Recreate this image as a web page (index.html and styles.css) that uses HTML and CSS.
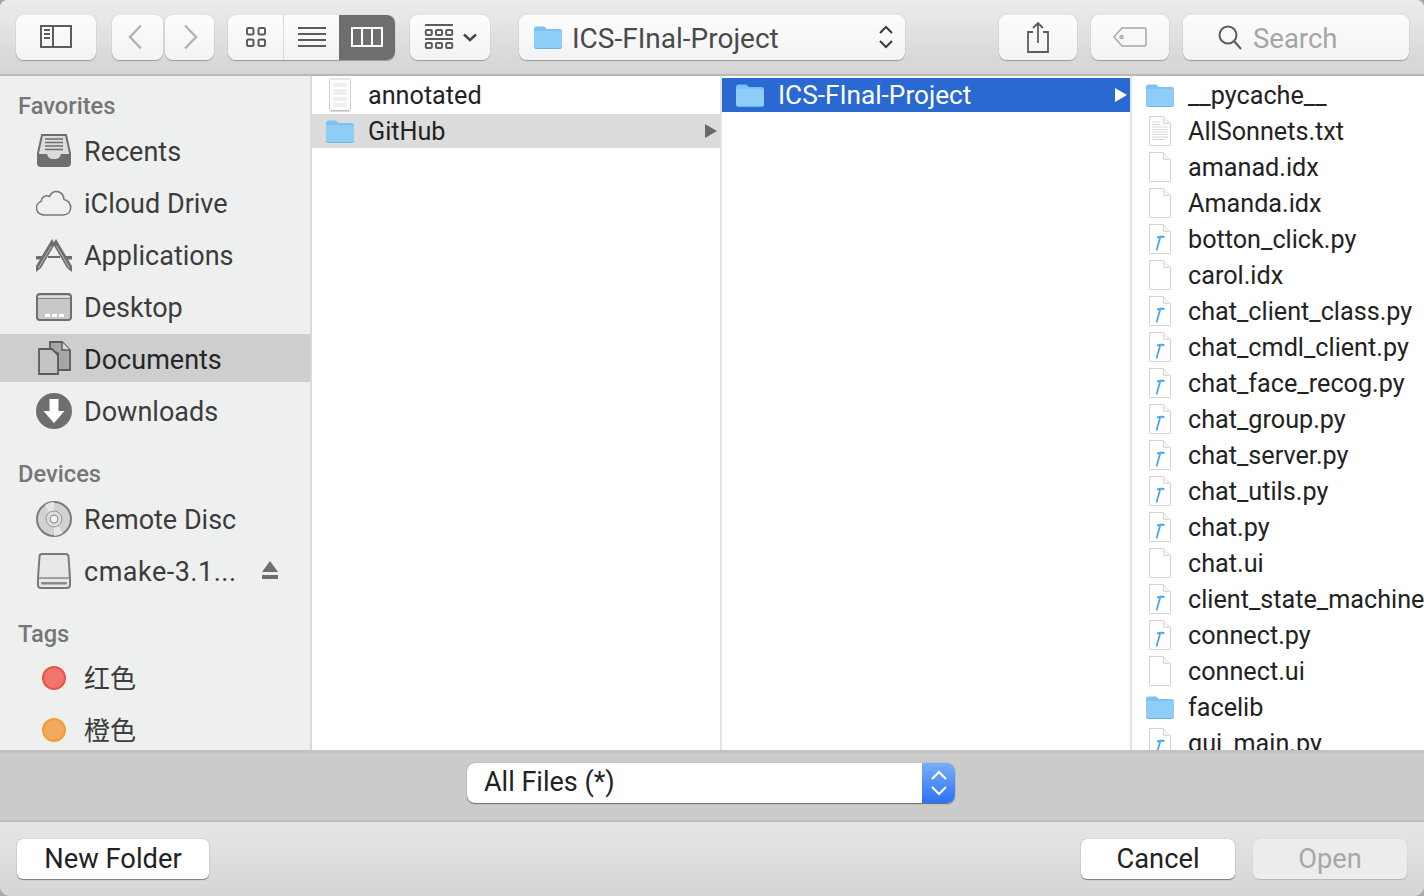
FILE: index.html
```html
<!DOCTYPE html>
<html lang="en">
<head>
    <meta charset="UTF-8">
    <title>Open</title>
    <link rel="stylesheet" href="styles.css">
</head>
<body>

<svg class="defs" width="0" height="0">
    <symbol id="folder" viewBox="0 0 30 24">
        <path d="M1 4.500C1 2.500 2 1.500 3.500 1.500H10c1.500 0 2 .6 2.800 1.600.5.6 1 .9 2 .9h11.700C28.100 4 29 4.900 29 6.500V21c0 1.500-.9 2.500-2.500 2.500h-23C2 23.500 1 22.500 1 21z" fill="#7cc2f5"/>
        <path d="M1 7.500C1 6.500 1.800 6 2.800 6h24.400c1 0 1.800.5 1.800 1.500V21c0 1.500-.9 2.500-2.500 2.500h-23C2 23.500 1 22.500 1 21z" fill="#8dcdf8"/>
        <path d="M1 22c.3 1 1.200 1.500 2.500 1.500h23c1.300 0 2.200-.5 2.500-1.500" fill="none" stroke="#6fb2e2"/>
    </symbol>
    <symbol id="page" viewBox="0 0 24 32">
        <path d="M1.500 1.500h14l7 7v21a1 1 0 0 1-1 1h-19a1 1 0 0 1-1-1z" fill="#fff" stroke="#d2d2d2"/>
        <path d="M15.500 1.500v7h7" fill="#f4f4f4" stroke="#d8d8d8"/>
    </symbol>
    <symbol id="py" viewBox="0 0 24 32">
        <use href="#page" width="24" height="32"/>
        <path d="M9 14.500c2-.8 4.500-1 7.500-.5M12.300 14 8.500 27.500" fill="none" stroke="#4aa8ee" stroke-width="1.800"/>
    </symbol>
    <symbol id="txt" viewBox="0 0 24 32">
        <use href="#page" width="24" height="32"/>
        <path d="M4 7h8M4 9.500h8M4 12h16M4 14.500h16M4 17h16M4 19.500h16M4 22h16M4 24.500h12" stroke="#cfcfcf" stroke-width=".8"/>
    </symbol>
    <symbol id="preview" viewBox="0 0 24 34">
        <rect x="1.500" y="1" width="21" height="31.500" rx="1" fill="#fff" stroke="#cfcfcf"/>
        <path d="M5 6h14M5 8h14M5 12h14M5 14h14M5 16h14M5 20h14M5 22h14M5 26h14M5 28h14" stroke="#e2e2e2" stroke-width="1.200"/>
        <path d="M2 33h20" stroke="#b8b8b8"/>
    </symbol>
</svg>

<div class="window">
    <div class="toolbar">
        <button class="tool sidebar-btn">
            <svg width="32" height="24" viewBox="0 0 32 24" fill="none" stroke="#5c5c5c" stroke-width="2"><rect x="1" y="1" width="30" height="21"/><path d="M13 1v21"/><path d="M4 5h6M4 9h6M4 13h6"/></svg>
        </button>
        <div class="nav-pair">
            <button class="tool back-btn">
                <svg width="16" height="26" viewBox="0 0 16 26" fill="none" stroke="#b4b4b4" stroke-width="2.500"><path d="M14 1.500 3 13l11 11.500"/></svg>
            </button>
            <button class="tool forward-btn">
                <svg width="16" height="26" viewBox="0 0 16 26" fill="none" stroke="#b4b4b4" stroke-width="2.500"><path d="m2 1.500 11 11.500L2 24.500"/></svg>
            </button>
        </div>
        <div class="view-group">
            <button class="view-seg seg-icons">
                <svg width="20" height="20" viewBox="0 0 20 20" fill="none" stroke="#5c5c5c" stroke-width="2"><rect x="1" y="1" width="6.500" height="6.500" rx="1.500"/><rect x="12.500" y="1" width="6.500" height="6.500" rx="1.500"/><rect x="1" y="12.500" width="6.500" height="6.500" rx="1.500"/><rect x="12.500" y="12.500" width="6.500" height="6.500" rx="1.500"/></svg>
            </button>
            <button class="view-seg seg-list">
                <svg width="28" height="20" viewBox="0 0 28 20" stroke="#5c5c5c" stroke-width="2"><path d="M0 1h28M0 7h28M0 13h28M0 19h28"/></svg>
            </button>
            <button class="view-seg seg-columns">
                <svg width="32" height="20" viewBox="0 0 32 20" fill="none" stroke="#fff" stroke-width="2"><rect x="1" y="1" width="30" height="18"/><path d="M11 1v18M21 1v18"/></svg>
            </button>
        </div>
        <button class="tool arrange-btn">
            <svg width="30" height="26" viewBox="0 0 30 26" fill="none" stroke="#5c5c5c"><path d="M1 1h28M1 15h28" stroke-width="1.800"/><rect x="1.800" y="6" width="6" height="5" rx="1" stroke-width="2"/><rect x="12" y="6" width="6" height="5" rx="1" stroke-width="2"/><rect x="22.200" y="6" width="6" height="5" rx="1" stroke-width="2"/><rect x="1.800" y="19" width="6" height="5" rx="1" stroke-width="2"/><rect x="12" y="19" width="6" height="5" rx="1" stroke-width="2"/><rect x="22.200" y="19" width="6" height="5" rx="1" stroke-width="2"/></svg>
            <svg width="14" height="9" viewBox="0 0 14 9" fill="none" stroke="#4a4a4a" stroke-width="2.500"><path d="m1 1.500 6 5.500 6-5.500"/></svg>
        </button>
        <button class="tool path-popup">
            <svg width="30" height="24" class="path-folder"><use href="#folder"/></svg>
            <span class="path-name">ICS-FInal-Project</span>
            <svg width="16" height="26" viewBox="0 0 16 26" fill="none" stroke="#3c3c3c" stroke-width="2"><path d="m2 9 6-6 6 6M2 17l6 6 6-6"/></svg>
        </button>
        <button class="tool share-btn">
            <svg width="24" height="32" viewBox="0 0 24 32" fill="none" stroke="#5c5c5c" stroke-width="1.800"><path d="M7 11H2v20h20V11h-5"/><path d="M12 22V2M7 7l5-5 5 5"/></svg>
        </button>
        <button class="tool tag-btn">
            <svg width="34" height="20" viewBox="0 0 34 20" fill="none" stroke="#a8a8a8" stroke-width="1.500"><path d="M9 1h22a2 2 0 0 1 2 2v14a2 2 0 0 1-2 2H9l-8-9z"/><circle cx="8.500" cy="10" r="1.500"/></svg>
        </button>
        <div class="tool search-box">
            <svg width="26" height="26" viewBox="0 0 26 26" fill="none" stroke="#5c5c5c" stroke-width="2"><circle cx="11" cy="11" r="8.500"/><path d="m17 17 7 8"/></svg>
            <span class="search-text">Search</span>
        </div>
    </div>

    <div class="browser">
        <div class="sidebar">
            <div class="side-head first">Favorites</div>
            <div class="side-item">
                <svg class="side-icon" width="36" height="36" viewBox="0 0 36 36"><path d="M6 2h24l4 18v10a3 3 0 0 1-3 3H5a3 3 0 0 1-3-3V20z" fill="#dcdcdc" stroke="#6e6e6e" stroke-width="2"/><path d="M9 6h18M9 9.500h18M9 13h18M9 16.500h18" stroke="#6e6e6e" stroke-width="1.500"/><path d="M2 21h9c1 4 3 5 7 5s6-1 7-5h9v9a3 3 0 0 1-3 3H5a3 3 0 0 1-3-3z" fill="#6e6e6e"/></svg>
                <span>Recents</span>
            </div>
            <div class="side-item">
                <svg class="side-icon" width="36" height="36" viewBox="0 0 36 36"><path d="M9 30C-1 30-2 19 5 16.500c.5-4.500 5-7 8.500-5C17 4 27 5 28 14.500c9 1.500 9 15.500-1 15.500z" fill="#f0f0f0" stroke="#7a7a7a" stroke-width="1.600"/></svg>
                <span>iCloud Drive</span>
            </div>
            <div class="side-item">
                <svg class="side-icon" width="36" height="36" viewBox="0 0 36 36"><path d="M16 2 0 29v6l5-4L19 7z" fill="#6e6e6e"/><path d="M20 2 17 7l14 24 5 4v-6z" fill="#6e6e6e"/><path d="M15.500 9 2.500 31M20.500 9l13 22" stroke="#bdbdbd"/><path d="M0 19h6v3.500H0zM30 19h6v3.500h-6zM12 19h12v2H12z" fill="#6e6e6e"/></svg>
                <span>Applications</span>
            </div>
            <div class="side-item">
                <svg class="side-icon" width="36" height="36" viewBox="0 0 36 36"><rect x="1" y="5" width="34" height="26" rx="3" fill="#c8c8c8" stroke="#6e6e6e" stroke-width="2"/><path d="M1 9h34" stroke="#6e6e6e" stroke-width="1.500"/><path d="M2 8h32" stroke="#efefef" stroke-width="1.500"/><path d="M9 28h5v-3H9zM16 28h5v-3h-5zM23 28h5v-3h-5z" fill="#fff"/></svg>
                <span>Desktop</span>
            </div>
            <div class="side-item selected">
                <svg class="side-icon" width="36" height="36" viewBox="0 0 36 36"><path d="M14 2h12l8 8v20H22V13l-8-3z" fill="#a6a6a6" stroke="#5c5c5c" stroke-width="1.800"/><path d="M3 9h13l6 6v19H3z" fill="#c4c4c4" stroke="#5c5c5c" stroke-width="1.800"/><path d="M26 2v8h8" fill="#d8d8d8" stroke="#5c5c5c" stroke-width="1.500"/></svg>
                <span>Documents</span>
            </div>
            <div class="side-item">
                <svg class="side-icon" width="36" height="36" viewBox="0 0 36 36"><circle cx="18" cy="18" r="18" fill="#6e6e6e"/><path d="M13.500 6h9v12h6L18 30 7.500 18h6z" fill="#fff"/></svg>
                <span>Downloads</span>
            </div>

            <div class="side-head">Devices</div>
            <div class="side-item">
                <svg class="side-icon" width="36" height="36" viewBox="0 0 36 36"><circle cx="18" cy="18" r="17" fill="#d2d2d2" stroke="#7c7c7c" stroke-width="2"/><path d="M18 18 9 4a17 17 0 0 1 9-3zM18 18l9 14a17 17 0 0 1-9 3z" fill="#e6e6e6"/><circle cx="18" cy="18" r="8" fill="#dcdcdc" stroke="#9a9a9a"/><circle cx="18" cy="18" r="4" fill="#f0f0f0" stroke="#8a8a8a"/></svg>
                <span>Remote Disc</span>
            </div>
            <div class="side-item">
                <svg class="side-icon" width="36" height="36" viewBox="0 0 36 36"><path d="M6 1h24a2.500 2.500 0 0 1 2.500 2.500L34 25v7a3 3 0 0 1-3 3H5a3 3 0 0 1-3-3v-7L3.500 3.500A2.500 2.500 0 0 1 6 1z" fill="#e8e8e8" stroke="#7a7a7a" stroke-width="2"/><path d="M2 25h32" stroke="#8a8a8a" stroke-width="1.500"/><rect x="5" y="29" width="26" height="2.500" rx="1" fill="#8a8a8a"/></svg>
                <span class="device-name">cmake-3.1...</span>
                <svg class="eject" width="18" height="18" viewBox="0 0 18 18" fill="#6e6e6e"><path d="M9 0 17 11H1z"/><rect x="1" y="14" width="16" height="4"/></svg>
            </div>

            <div class="side-head tags-head">Tags</div>
            <div class="side-item">
                <span class="tag-dot red"></span>
                <span class="tag-label">红色</span>
            </div>
            <div class="side-item">
                <span class="tag-dot orange"></span>
                <span class="tag-label">橙色</span>
            </div>
        </div>

        <div class="column">
            <div class="row">
                <svg class="row-icon" width="30" height="34" viewBox="0 0 30 34"><use href="#preview" x="3" y="0" width="24" height="34"/></svg>
                <span>annotated</span>
            </div>
            <div class="row open">
                <svg class="row-icon" width="30" height="24"><use href="#folder"/></svg>
                <span>GitHub</span>
                <span class="arrow"></span>
            </div>
        </div>

        <div class="column">
            <div class="row current">
                <svg class="row-icon" width="30" height="24"><use href="#folder"/></svg>
                <span>ICS-FInal-Project</span>
                <span class="arrow"></span>
            </div>
        </div>

        <div class="column last">
            <div class="row"><svg class="row-icon" width="30" height="24"><use href="#folder"/></svg><span>__pycache__</span></div>
            <div class="row"><svg class="row-icon" width="30" height="34" viewBox="0 0 30 34"><use href="#txt" x="3" y="1" width="24" height="32"/></svg><span>AllSonnets.txt</span></div>
            <div class="row"><svg class="row-icon" width="30" height="34" viewBox="0 0 30 34"><use href="#page" x="3" y="1" width="24" height="32"/></svg><span>amanad.idx</span></div>
            <div class="row"><svg class="row-icon" width="30" height="34" viewBox="0 0 30 34"><use href="#page" x="3" y="1" width="24" height="32"/></svg><span>Amanda.idx</span></div>
            <div class="row"><svg class="row-icon" width="30" height="34" viewBox="0 0 30 34"><use href="#py" x="3" y="1" width="24" height="32"/></svg><span>botton_click.py</span></div>
            <div class="row"><svg class="row-icon" width="30" height="34" viewBox="0 0 30 34"><use href="#page" x="3" y="1" width="24" height="32"/></svg><span>carol.idx</span></div>
            <div class="row"><svg class="row-icon" width="30" height="34" viewBox="0 0 30 34"><use href="#py" x="3" y="1" width="24" height="32"/></svg><span>chat_client_class.py</span></div>
            <div class="row"><svg class="row-icon" width="30" height="34" viewBox="0 0 30 34"><use href="#py" x="3" y="1" width="24" height="32"/></svg><span>chat_cmdl_client.py</span></div>
            <div class="row"><svg class="row-icon" width="30" height="34" viewBox="0 0 30 34"><use href="#py" x="3" y="1" width="24" height="32"/></svg><span>chat_face_recog.py</span></div>
            <div class="row"><svg class="row-icon" width="30" height="34" viewBox="0 0 30 34"><use href="#py" x="3" y="1" width="24" height="32"/></svg><span>chat_group.py</span></div>
            <div class="row"><svg class="row-icon" width="30" height="34" viewBox="0 0 30 34"><use href="#py" x="3" y="1" width="24" height="32"/></svg><span>chat_server.py</span></div>
            <div class="row"><svg class="row-icon" width="30" height="34" viewBox="0 0 30 34"><use href="#py" x="3" y="1" width="24" height="32"/></svg><span>chat_utils.py</span></div>
            <div class="row"><svg class="row-icon" width="30" height="34" viewBox="0 0 30 34"><use href="#py" x="3" y="1" width="24" height="32"/></svg><span>chat.py</span></div>
            <div class="row"><svg class="row-icon" width="30" height="34" viewBox="0 0 30 34"><use href="#page" x="3" y="1" width="24" height="32"/></svg><span>chat.ui</span></div>
            <div class="row"><svg class="row-icon" width="30" height="34" viewBox="0 0 30 34"><use href="#py" x="3" y="1" width="24" height="32"/></svg><span>client_state_machine.py</span></div>
            <div class="row"><svg class="row-icon" width="30" height="34" viewBox="0 0 30 34"><use href="#py" x="3" y="1" width="24" height="32"/></svg><span>connect.py</span></div>
            <div class="row"><svg class="row-icon" width="30" height="34" viewBox="0 0 30 34"><use href="#page" x="3" y="1" width="24" height="32"/></svg><span>connect.ui</span></div>
            <div class="row"><svg class="row-icon" width="30" height="24"><use href="#folder"/></svg><span>facelib</span></div>
            <div class="row"><svg class="row-icon" width="30" height="34" viewBox="0 0 30 34"><use href="#py" x="3" y="1" width="24" height="32"/></svg><span>gui_main.py</span></div>
        </div>
    </div>

    <div class="filter-bar">
        <div class="filter-select">
            <span class="filter-text">All Files (*)</span>
            <span class="filter-stepper">
                <svg width="18" height="30" viewBox="0 0 18 30" fill="none" stroke="#fff" stroke-width="2.200"><path d="m2 11 7-7 7 7M2 19l7 7 7-7"/></svg>
            </span>
        </div>
    </div>

    <div class="footer">
        <button class="push new-folder">New Folder</button>
        <div class="footer-right">
            <button class="push cancel">Cancel</button>
            <button class="push open-btn">Open</button>
        </div>
    </div>
</div>

</body>
</html>
```

FILE: styles.css
```css
* {
    box-sizing: border-box;
}
html, body {
    height: 100%;
}
body {
    margin: 0;
    background-color: #a8a8a8;
    font-family: Roboto, "Noto Sans CJK SC", sans-serif;
    font-size: 26px;
    color: #222;
    overflow: hidden;
}
.defs {
    position: absolute;
}
button {
    font-family: inherit;
    font-size: inherit;
    padding: 0;
    margin: 0;
}
.window {
    display: flex;
    flex-direction: column;
    height: 896px;
    background: #e0e0e0;
    border-radius: 8px 8px 10px 10px;
    overflow: hidden;
}

/* toolbar */
.toolbar {
    flex: none;
    display: flex;
    align-items: center;
    height: 76px;
    padding: 0 15px 0 16px;
    background: linear-gradient(#ececec, #d4d4d4);
    border-bottom: 2px solid #b9b9b9;
}
.tool {
    display: flex;
    align-items: center;
    justify-content: center;
    height: 45px;
    background: linear-gradient(#fdfdfd, #f3f3f3);
    border: none;
    border-radius: 8px;
    box-shadow: 0 1px 1px rgba(0, 0, 0, 0.28), 0 0 1px rgba(0, 0, 0, 0.2);
}
.sidebar-btn {
    width: 80px;
}
.nav-pair {
    display: flex;
    gap: 2px;
    margin-left: 16px;
}
.back-btn {
    width: 51px;
    padding-right: 5px;
}
.forward-btn {
    width: 49px;
    padding-left: 3px;
}
.view-group {
    display: flex;
    width: 167px;
    height: 45px;
    margin-left: 14px;
    background: linear-gradient(#fdfdfd, #f3f3f3);
    border-radius: 8px;
    box-shadow: 0 1px 1px rgba(0, 0, 0, 0.28), 0 0 1px rgba(0, 0, 0, 0.2);
}
.view-seg {
    display: flex;
    align-items: center;
    justify-content: center;
    background: none;
    border: none;
}
.seg-icons {
    width: 56px;
    border-right: 1px solid #d9d9d9;
}
.seg-list {
    width: 55px;
}
.seg-columns {
    width: 56px;
    background: #6e6e6e;
    border-radius: 0 8px 8px 0;
}
.arrange-btn {
    width: 80px;
    gap: 9px;
    margin-left: 15px;
}
.path-popup {
    width: 386px;
    justify-content: flex-start;
    margin-left: 29px;
    padding: 0 11px 0 14px;
    color: #4a4a4a;
}
.path-folder {
    flex: none;
}
.path-name {
    flex: 1;
    margin-left: 9px;
    padding-top: 3px;
    font-size: 28px;
    text-align: left;
}
.share-btn {
    width: 78px;
    margin-left: 94px;
}
.tag-btn {
    width: 78px;
    margin-left: 14px;
}
.search-box {
    width: 226px;
    justify-content: flex-start;
    margin-left: 14px;
    padding-left: 34px;
}
.search-text {
    margin-left: 10px;
    padding-top: 3px;
    font-size: 27.5px;
    color: #a6a6a6;
}

/* browser */
.browser {
    flex: 1;
    min-height: 0;
    display: flex;
    background: #fff;
}
.sidebar {
    flex: none;
    width: 312px;
    height: 100%;
    overflow: hidden;
    background: #eeefef;
    border-right: 2px solid #d9d9d9;
}
.side-head {
    height: 24px;
    margin: 27px 0 9px 18px;
    line-height: 24px;
    font-size: 23.7px;
    font-weight: 500;
    color: #767676;
}
.side-head.first {
    margin-top: 18px;
}
.side-head.tags-head {
    margin-bottom: 8px;
}
.side-item {
    display: flex;
    align-items: center;
    height: 48px;
    margin-bottom: 4px;
    padding-left: 36px;
    font-size: 27px;
    white-space: nowrap;
    color: #3c3c3c;
}
.side-item > span {
    padding-top: 2px;
}
.side-item.selected {
    margin-top: -1px;
    margin-bottom: 5px;
    padding-top: 2px;
    background: #cdcecf;
    color: #262626;
}
.side-item.selected .side-icon {
    margin-top: -2px;
}
.side-icon {
    flex: none;
    margin-right: 12px;
}
.device-name {
    width: 152px;
    letter-spacing: .5px;
}
.eject {
    margin: -3px 0 0 25px;
}
.tag-dot {
    flex: none;
    width: 24px;
    height: 24px;
    margin: 0 18px 0 6px;
    border-radius: 50%;
}
.tag-dot.red {
    background: #f1756c;
    border: 2px solid #ef5147;
}
.tag-dot.orange {
    background: #f3a95f;
    border: 2px solid #f59c34;
}
.tag-label {
    margin-bottom: 6px;
    font-size: 26px;
}

/* columns */
.column {
    flex: none;
    width: 410px;
    height: 100%;
    padding-top: 2px;
    overflow: hidden;
    font-size: 25.2px;
    border-right: 2px solid #e4e4e4;
}
.column.last {
    flex: 1;
    width: auto;
    border-right: none;
}
.row {
    position: relative;
    display: flex;
    align-items: center;
    height: 34px;
    margin-bottom: 2px;
    padding-left: 13px;
    white-space: nowrap;
}
.row-icon {
    flex: none;
    margin-right: 13px;
}
.row.open {
    background: #dcdcdc;
}
.row.current {
    font-size: 26.2px;
    background: #2a68d2;
    color: #fff;
}
.arrow {
    position: absolute;
    right: 3px;
    top: 10px;
    border-left: 12px solid #6a6a6a;
    border-top: 7px solid transparent;
    border-bottom: 7px solid transparent;
}
.row.current .arrow {
    border-left-color: #fff;
}

/* file type filter */
.filter-bar {
    flex: none;
    display: flex;
    justify-content: center;
    height: 72px;
    padding: 10px 2px 0 0;
    background: #cbcbcb;
    border-top: 3px solid #c2c2c2;
    border-bottom: 2px solid #bdbdbd;
}
.filter-select {
    display: flex;
    width: 488px;
    height: 40px;
    background: #fff;
    border-radius: 8px;
    box-shadow: 0 1px 1px rgba(0, 0, 0, 0.45), 0 0 1px rgba(0, 0, 0, 0.4);
    overflow: hidden;
}
.filter-text {
    flex: 1;
    padding-left: 17px;
    line-height: 38px;
    font-size: 27px;
}
.filter-stepper {
    display: flex;
    align-items: center;
    justify-content: center;
    width: 33px;
    background: linear-gradient(#78aef6, #2d72f3);
}

/* footer */
.footer {
    flex: none;
    display: flex;
    align-items: center;
    justify-content: space-between;
    height: 74px;
    padding: 0 17px;
    background: linear-gradient(#e6e6e6, #d5d5d5);
}
.footer-right {
    display: flex;
    gap: 18px;
}
.push {
    height: 40px;
    font-size: 27.3px;
    color: #222;
    background: #fff;
    border: none;
    border-radius: 6px;
    box-shadow: 0 1px 1px rgba(0, 0, 0, 0.4), 0 0 1px rgba(0, 0, 0, 0.35);
}
.new-folder {
    width: 192px;
}
.cancel,
.open-btn {
    width: 154px;
}
.open-btn {
    color: #a8a8a8;
    background: #ececec;
    box-shadow: 0 1px 1px rgba(0, 0, 0, 0.15), 0 0 1px rgba(0, 0, 0, 0.15);
}
```
